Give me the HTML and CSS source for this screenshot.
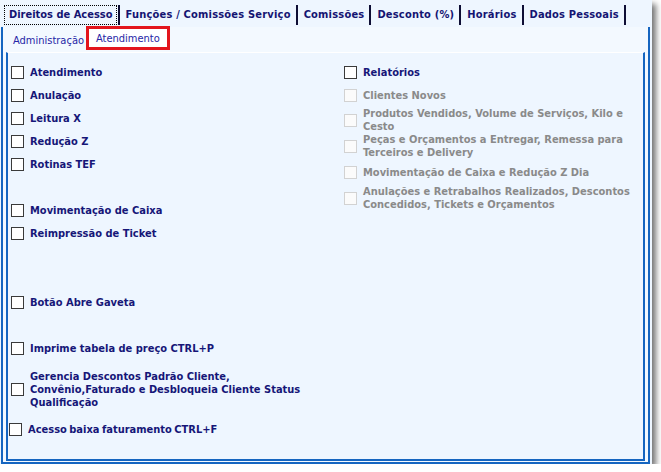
FILE: index.html
```html
<!DOCTYPE html>
<html lang="pt">
<head>
<meta charset="utf-8">
<title>Direitos de Acesso</title>
<link rel="stylesheet" href="styles.css">
</head>
<body>
<div class="window">
  <div class="tabs">
    <div class="tab tab-active"><span class="focus">Direitos de Acesso</span></div>
    <div class="tab">Funções / Comissões Serviço</div>
    <div class="tab">Comissões</div>
    <div class="tab">Desconto (%)</div>
    <div class="tab">Horários</div>
    <div class="tab">Dados Pessoais</div>
  </div>
  <div class="sheet">
    <div class="subtabs">
      <div class="subtab">Administração</div>
      <div class="subtab subtab-current">Atendimento</div>
    </div>
    <div class="subsheet">
      <div class="cols">
        <div class="col">
          <label class="row"><span class="box"></span><span class="txt">Atendimento</span></label>
          <label class="row"><span class="box"></span><span class="txt">Anulação</span></label>
          <label class="row"><span class="box"></span><span class="txt">Leitura X</span></label>
          <label class="row"><span class="box"></span><span class="txt">Redução Z</span></label>
          <label class="row"><span class="box"></span><span class="txt">Rotinas TEF</span></label>
          <label class="row gap1"><span class="box"></span><span class="txt">Movimentação de Caixa</span></label>
          <label class="row"><span class="box"></span><span class="txt">Reimpressão de Ticket</span></label>
          <label class="row gap2"><span class="box"></span><span class="txt">Botão Abre Gaveta</span></label>
          <label class="row gap1"><span class="box"></span><span class="txt">Imprime tabela de preço CTRL+P</span></label>
          <label class="row tall"><span class="box"></span><span class="txt">Gerencia Descontos Padrão Cliente,<br>Convênio,Faturado e Desbloqueia Cliente Status<br>Qualificação</span></label>
          <label class="row shifted"><span class="box"></span><span class="txt tight">Acesso baixa faturamento CTRL+F</span></label>
        </div>
        <div class="col">
          <label class="row"><span class="box"></span><span class="txt">Relatórios</span></label>
          <label class="row off"><span class="box"></span><span class="txt">Clientes Novos</span></label>
          <label class="row off double"><span class="box"></span><span class="txt">Produtos Vendidos, Volume de Serviços, Kilo e<br>Cesto</span></label>
          <label class="row off double"><span class="box"></span><span class="txt">Peças e Orçamentos a Entregar, Remessa para<br>Terceiros e Delivery</span></label>
          <label class="row off double"><span class="box"></span><span class="txt">Movimentação de Caixa e Redução Z Dia</span></label>
          <label class="row off double"><span class="box"></span><span class="txt">Anulações e Retrabalhos Realizados, Descontos<br>Concedidos, Tickets e Orçamentos</span></label>
        </div>
      </div>
    </div>
  </div>
</div>
</body>
</html>
```
FILE: styles.css
```css
html, body {
  margin: 0;
  padding: 0;
  background: #ffffff;
}
body {
  font-family: "DejaVu Sans Condensed", "DejaVu Sans", sans-serif;
  font-size: 11px;
}
.window {
  width: 652px;
  height: 464px;
  background: #eef6ff;
  box-shadow: 4px 4px 6px rgba(0, 0, 0, 0.55);
  display: flex;
  flex-direction: column;
}
.tabs {
  height: 27px;
  box-sizing: border-box;
  padding: 5px 0 0 4px;
  display: flex;
  align-items: flex-start;
}
.tab {
  height: 20px;
  line-height: 20px;
  font-weight: bold;
  color: #141472;
  letter-spacing: 0.2px;
  padding: 0 5px 0 6px;
  border-right: 2px solid #0e0e35;
  white-space: nowrap;
}
.tab-active {
  padding: 0 1px 0 0;
  letter-spacing: 0;
}
.focus {
  display: block;
  height: 20px;
  box-sizing: border-box;
  line-height: 18px;
  border: 1px dotted #000;
  padding: 0 3px 0 4px;
}
.sheet {
  flex: 1;
  margin-left: 1px;
  width: 649px;
  box-sizing: border-box;
  border: 2px solid #1565c0;
  border-top: none;
  display: flex;
  flex-direction: column;
  background: #f3f9ff;
}
.subtabs {
  height: 25px;
  display: flex;
  align-items: flex-start;
  padding-left: 10px;
}
.subtab {
  color: #2626a6;
  height: 25px;
  line-height: 28px;
  white-space: nowrap;
}
.subtab-current {
  margin-top: -1px;
  margin-left: 2px;
  height: 24px;
  box-sizing: border-box;
  line-height: 20px;
  border: 3px solid #e3151d;
  background: #ffffff;
  padding: 0 7px;
}
.subsheet {
  flex: 1;
  margin: 0 3px 1px 3px;
  border: 2px solid #1565c0;
  border-top: 1px solid #ffffff;
  background: #eef6ff;
}
.cols {
  display: grid;
  grid-template-columns: 333px 1fr;
  padding: 8px 0 0 3px;
}
.col {
  display: flex;
  flex-direction: column;
}
.row {
  display: flex;
  align-items: center;
  height: 23px;
  font-weight: bold;
  color: #161678;
  line-height: 13px;
}
.box {
  flex: none;
  width: 13px;
  height: 13px;
  box-sizing: border-box;
  border: 1px solid #3a3a3a;
  background: #ffffff;
  margin-right: 6px;
}
.gap1 { margin-top: 23px; }
.gap2 { margin-top: 46px; }
.tall { height: 58px; }
.double { height: 26px; }
.shifted { margin-left: -2px; }
.tight { word-spacing: -1px; }
.off { color: #8a8a8a; }
.off .box {
  border-color: #d2d2d2;
  background: #fbfbfb;
}
```
